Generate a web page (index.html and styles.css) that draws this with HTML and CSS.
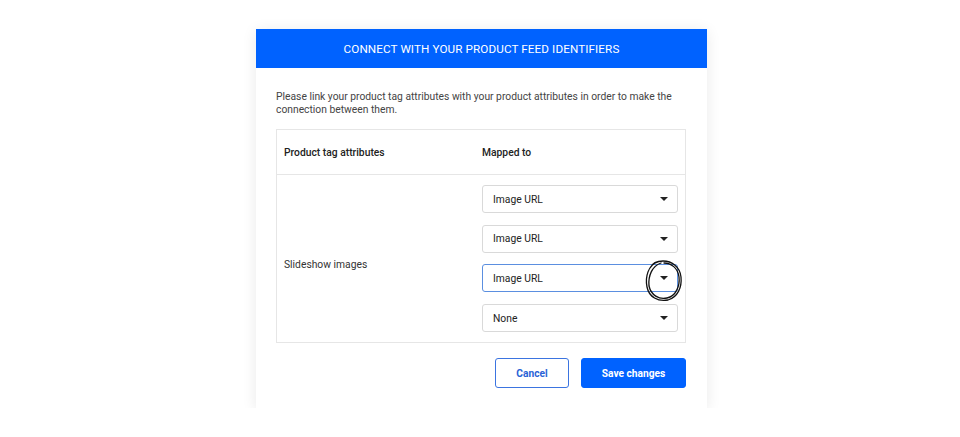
FILE: index.html
```html
<!DOCTYPE html>
<html lang="en">
<head>
<meta charset="utf-8">
<title>Connect with your product feed identifiers</title>
<link rel="stylesheet" href="styles.css">
</head>
<body>
<div class="modal">
  <div class="modal-header">CONNECT WITH YOUR PRODUCT FEED IDENTIFIERS</div>
  <div class="modal-body">
    <p class="intro">Please link your product tag attributes with your product attributes in order to make the connection between them.</p>
    <div class="table">
      <div class="row head">
        <div class="col-a">Product tag attributes</div>
        <div class="col-b">Mapped to</div>
      </div>
      <div class="row body-row">
        <div class="col-a label-cell">Slideshow images</div>
        <div class="col-b selects">
          <div class="select"><span>Image URL</span><svg class="caret" viewBox="0 0 8 4" width="8" height="4"><path d="M0 0H8L4 4Z"/></svg></div>
          <div class="select"><span>Image URL</span><svg class="caret" viewBox="0 0 8 4" width="8" height="4"><path d="M0 0H8L4 4Z"/></svg></div>
          <div class="select focused"><span>Image URL</span><svg class="caret" viewBox="0 0 8 4" width="8" height="4"><path d="M0 0H8L4 4Z"/></svg>
            <svg class="scribble" viewBox="0 0 40 44" width="40" height="44">
              <path d="M14 3 C4 6 1 18 3 28 C5 38 14 43 24 41 C34 38 38 28 37 18 C36 8 28 2 19 2 C13 2 8 5 6 9" />
              <path d="M17 4 C8 7 4 17 5 27 C7 36 15 41 23 39 C32 37 36 27 35 18 C34 9 27 4 20 4" />
            </svg>
          </div>
          <div class="select"><span>None</span><svg class="caret" viewBox="0 0 8 4" width="8" height="4"><path d="M0 0H8L4 4Z"/></svg></div>
        </div>
      </div>
    </div>
    <div class="actions">
      <button class="btn btn-outline">Cancel</button>
      <button class="btn btn-primary">Save changes</button>
    </div>
  </div>
</div>
</body>
</html>
```
FILE: styles.css
```css
* { box-sizing: border-box; }
html, body {
  margin: 0;
  padding: 0;
  background: #ffffff;
  font-family: Roboto, "Liberation Sans", Arial, sans-serif;
}
.modal {
  width: 451px;
  margin: 29px 0 0 256px;
  background: #ffffff;
  box-shadow: 0 2px 14px rgba(0, 0, 0, 0.09);
}
.modal-header {
  height: 39px;
  background: #0062ff;
  color: #ffffff;
  font-size: 11.7px;
  display: flex;
  align-items: center;
  justify-content: center;
  letter-spacing: 0.1px;
}
.modal-body {
  padding: 22px 21px 20px 20px;
}
.intro {
  margin: 0 0 13px;
  font-size: 10.3px;
  line-height: 13px;
  color: #444;
}
.table {
  border: 1px solid #e6e6e6;
}
.row {
  display: flex;
}
.head {
  height: 45px;
  align-items: center;
  border-bottom: 1px solid #e6e6e6;
  font-size: 10.3px;
  font-weight: 500;
  color: #222;
}
.col-a {
  width: 205px;
  padding-left: 7px;
}
.col-b {
  flex: 1;
  padding-right: 7px;
}
.body-row {
  align-items: center;
  font-size: 10.3px;
  color: #333;
}
.label-cell {
  padding-top: 11px;
}
.selects {
  padding-top: 10px;
  padding-bottom: 10px;
  display: flex;
  flex-direction: column;
  gap: 11.7px;
}
.select {
  position: relative;
  height: 28px;
  border: 1px solid #d9d9d9;
  border-radius: 3px;
  display: flex;
  align-items: center;
  justify-content: space-between;
  padding: 0 9px 0 10px;
  font-size: 10.3px;
  color: #222;
  background: #fff;
}
.select.focused {
  border-color: #5b8fe0;
}
.caret path { fill: #222; }
.scribble {
  position: absolute;
  right: -7px;
  top: -6px;
}
.scribble path {
  fill: none;
  stroke: #111;
  stroke-width: 1.3;
  stroke-linecap: round;
}
.actions {
  display: flex;
  justify-content: flex-end;
  gap: 12px;
  margin-top: 15px;
}
.btn {
  height: 30px;
  border-radius: 3px;
  font-family: Roboto, "Liberation Sans", Arial, sans-serif;
  font-size: 10.2px;
  font-weight: 700;
  cursor: pointer;
}
.btn-outline {
  width: 74px;
  background: #fff;
  color: #2a63d6;
  border: 1px solid #3b74e0;
}
.btn-primary {
  width: 105px;
  background: #0062ff;
  color: #fff;
  border: 1px solid #0062ff;
}
```
